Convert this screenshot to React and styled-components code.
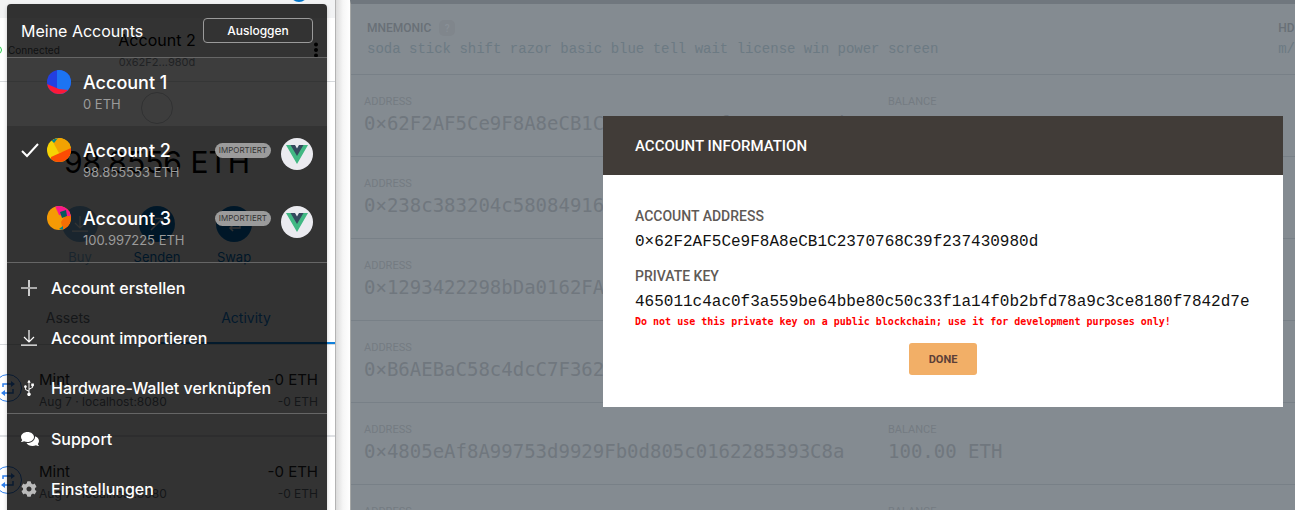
import React from "react";
import styled, { createGlobalStyle, css } from "styled-components";
import { FaComments, FaCog, FaUsb } from "react-icons/fa";

const GlobalStyle = createGlobalStyle`
  *, *::before, *::after { box-sizing: border-box; }
  body { margin: 0; background: #fff; font-family: Inter, "Liberation Sans", sans-serif; }
  button { font: inherit; cursor: pointer; }
  a { color: inherit; text-decoration: none; }
  h1, h2, h3, p, ul, dl, dd { margin: 0; padding: 0; }
  ul { list-style: none; }
`;

const sans = css`font-family: Inter, "Liberation Sans", sans-serif;`;
const caps = css`font-family: Roboto, "Liberation Sans", sans-serif;`;
const mono = css`font-family: "DejaVu Sans Mono", "Liberation Mono", monospace;`;
const monoLight = css`font-family: "Liberation Mono", monospace;`;

const Page = styled.div`
  display: grid;
  grid-template-columns: 336px 14px minmax(0, 1fr);
  height: 100vh;
  overflow: hidden;
`;

/* ---------- wallet popup ---------- */

const Wallet = styled.section`
  ${sans}
  position: relative;
  overflow: hidden;
  border-right: 1px solid #b4b4b4;
  background: #fff;
`;

const WalletEdge = styled.div`
  background: linear-gradient(90deg, #dcdcdc, #f6f6f6 50%, #fff);
`;

const WalletContent = styled.div`
  margin-left: -21px;
`;

const NetworkBar = styled.div`
  height: 18px;
  display: flex;
  justify-content: flex-end;
  padding-right: 27px;
  background: #f2f3f4;
`;

const Identicon = styled.span`
  width: 18px;
  height: 18px;
  margin-top: -16px;
  border-radius: 50%;
  background: #0376c9;
`;

const WalletHeader = styled.header`
  display: grid;
  grid-template-columns: 82px 1fr 82px;
  align-items: center;
  height: 64px;
  border-bottom: 1px solid #d6d9dc;
`;

const Connected = styled.span`
  display: flex;
  align-items: center;
  gap: 6px;
  padding-left: 15px;
  font-size: 10px;
  color: #535a61;

  &::before {
    content: "";
    flex: none;
    width: 8px;
    height: 8px;
    border: 1px solid #28c94a;
    border-radius: 50%;
  }
`;

const CurrentAccount = styled.div`
  text-align: center;
  font-size: 16px;
  line-height: 24px;
  color: #000;

  small {
    display: block;
    font-size: 11px;
    line-height: 20px;
    color: #6a737d;
  }
`;

const KebabButton = styled.button`
  justify-self: end;
  display: flex;
  width: 24px;
  margin-right: 7px;
  padding: 0 10px;
  border: 0;
  background: none;
`;

const Overview = styled.div`
  display: flex;
  flex-direction: column;
  align-items: center;
  padding-top: 10px;
`;

const TokenCircle = styled.span`
  width: 32px;
  height: 32px;
  border: 1px solid #bbc0c5;
  border-radius: 50%;
`;

const Balance = styled.p`
  margin-top: 18px;
  font-size: 30px;
  font-weight: 400;
  line-height: 40px;
  color: #000;
`;

const Actions = styled.div`
  display: flex;
  margin-top: 24px;
`;

const ActionButton = styled.button`
  display: flex;
  flex-direction: column;
  align-items: center;
  gap: 6px;
  width: 77px;
  padding: 0;
  border: 0;
  background: none;
  font-size: 13px;
  line-height: 18px;
  color: #0376c9;
  opacity: ${(p) => (p.disabled ? 0.5 : 1)};

  span {
    display: grid;
    place-items: center;
    width: 36px;
    height: 36px;
    border-radius: 50%;
    background: #0376c9;
    color: #fff;
  }
`;

const Tabs = styled.div`
  display: flex;
  margin-top: 27px;
  border-bottom: 1px solid #d6d9dc;
`;

const Tab = styled.button`
  flex: 1;
  height: 51px;
  padding: 0;
  border: 0;
  border-bottom: 2px solid ${(p) => (p.$active ? "#1081dc" : "transparent")};
  background: none;
  font-size: 14px;
  color: ${(p) => (p.$active ? "#1081dc" : "#6a737d")};
`;

const Transaction = styled.li`
  display: grid;
  grid-template-columns: 28px 1fr auto;
  column-gap: 17px;
  align-items: center;
  height: 92px;
  padding: 2px 17px 0 15px;
  border-bottom: 2px solid #dfe1e4;
`;

const TxIcon = styled.svg`
  display: block;
  margin-bottom: 6px;
`;

const TxText = styled.p`
  text-align: ${(p) => p.$align || "left"};
  font-size: 15px;
  line-height: 22px;
  color: #24272a;

  small {
    display: block;
    font-size: 12px;
    color: #6a737d;
  }
`;

/* ---------- account menu ---------- */

const Menu = styled.nav`
  position: absolute;
  top: 4px;
  left: 7px;
  width: 320px;
  border-radius: 4px 4px 0 0;
  background: rgba(0, 0, 0, 0.8);
  box-shadow: 0 2px 4px rgba(0, 0, 0, 0.2);
  color: #fff;
`;

const MenuHeader = styled.header`
  display: flex;
  align-items: center;
  justify-content: space-between;
  height: 54px;
  padding: 0 14px;
  border-bottom: 1px solid #666;

  h2 {
    font-size: 16px;
    font-weight: 400;
  }
`;

const LogoutButton = styled.button`
  width: 110px;
  height: 25px;
  padding: 0;
  border: 1px solid #9a9a9a;
  border-radius: 4px;
  background: none;
  font-size: 12px;
  font-weight: 500;
  color: #fff;
`;

const AccountList = styled.ul`
  border-bottom: 1px solid #666;
`;

const AccountButton = styled.button`
  display: grid;
  grid-template-columns: 18px 24px 1fr auto 32px;
  column-gap: 10px;
  align-items: start;
  width: 100%;
  height: 68px;
  padding: 12px 14px 0 12px;
  border: 0;
  background: ${(p) => (p.$hover ? "rgba(255, 255, 255, 0.05)" : "none")};
  text-align: left;
  color: #fff;

  > svg { display: block; }
`;

const AccountText = styled.span`
  padding-left: 2px;
  font-size: 18px;
  font-weight: 500;
  line-height: 25px;
  white-space: nowrap;

  small {
    display: block;
    font-size: 13px;
    font-weight: 400;
    line-height: 18px;
    color: #9b9b9b;
  }
`;

const ImportedBadge = styled.span`
  margin-top: 5px;
  padding: 0 4px;
  border-radius: 8px;
  background: #9b9b9b;
  font-size: 8px;
  line-height: 15px;
  color: #333;
`;

const MenuGroup = styled.ul`
  border-bottom: 1px solid #666;
  &:last-child { border-bottom: 0; }
`;

const MenuItem = styled.button`
  display: grid;
  grid-template-columns: 20px 1fr;
  column-gap: 10px;
  align-items: center;
  width: 100%;
  height: 50px;
  padding: 0 14px;
  border: 0;
  background: none;
  text-align: left;
  font-size: 16px;
  font-weight: 500;
  color: #fff;
`;

/* ---------- workspace with dimmed account table ---------- */

const Workspace = styled.main`
  position: relative;
  overflow: hidden;
  border-top: 4px solid #70777e;
  border-left: 1px solid #a5a7a6;
  background: #848b91;
`;

const SeedBar = styled.section`
  display: flex;
  justify-content: space-between;
  height: 71px;
  padding: 14px 0 0 16px;
  border-bottom: 1px solid #788087;
`;

const SeedTitle = styled.h3`
  ${caps}
  display: flex;
  align-items: center;
  gap: 8px;
  height: 20px;
  font-size: 12px;
  font-weight: 500;
  color: #697077;
`;

const Help = styled.span`
  display: grid;
  place-items: center;
  width: 16px;
  height: 16px;
  border-radius: 5px;
  background: #80868c;
  font-size: 10px;
  color: #899097;
`;

const SeedText = styled.p`
  ${monoLight}
  font-size: 14px;
  line-height: 22px;
  white-space: nowrap;
  color: #6c7a83;
`;

const AccountTable = styled.table`
  width: 100%;
  border-collapse: separate;
  border-spacing: 0;
  table-layout: fixed;

  td {
    height: 82px;
    padding: 18px 0 0 13px;
    border-bottom: 1px solid #788087;
    vertical-align: top;
    white-space: nowrap;
  }
  td:first-child { width: 524px; }
`;

const CellLabel = styled.span`
  ${caps}
  display: block;
  font-size: 11px;
  line-height: 18px;
  color: #747b82;
`;

const CellValue = styled.span`
  ${mono}
  display: block;
  font-size: 19px;
  line-height: 24px;
  color: #70777e;
`;

/* ---------- modal ---------- */

const Modal = styled.section`
  position: absolute;
  top: 112px;
  right: 12px;
  width: 680px;
  background: #fff;
`;

const ModalHeader = styled.header`
  ${caps}
  display: flex;
  align-items: center;
  height: 59px;
  padding: 0 32px;
  background: #413c38;

  h1 {
    font-size: 15px;
    font-weight: 500;
    color: #fff;
  }
`;

const ModalBody = styled.div`
  display: flex;
  flex-direction: column;
  padding: 31px 32px 32px;
`;

const Field = styled.dl`
  & + & { margin-top: 12px; }

  dt {
    ${caps}
    font-size: 14px;
    font-weight: 500;
    line-height: 20px;
    color: #5f5a56;
  }
  dd {
    ${monoLight}
    margin-top: 4px;
    font-size: 16px;
    line-height: 24px;
    white-space: nowrap;
    color: #111;
  }
`;

const Warning = styled.p`
  ${mono}
  font-size: 10px;
  font-weight: 700;
  line-height: 16px;
  color: #f00;
`;

const DoneButton = styled.button`
  ${caps}
  align-self: center;
  width: 68px;
  height: 32px;
  margin-top: 13px;
  padding: 0;
  border: 0;
  border-radius: 3px;
  background: #f2af67;
  font-size: 11px;
  font-weight: 700;
  color: #5c4038;
`;

/* ---------- drawings ---------- */

const avatars = {
  one: (
    <>
      <path fill="#2340e1" d="M0 0h24v24H0z" />
      <path fill="#1c74f2" d="M10 0h14v24H10z" />
      <path fill="#fb1938" d="M0 14l12 5 9 1-3 4H0z" />
    </>
  ),
  two: (
    <>
      <path fill="#f6d204" d="M0 0h24v24H0z" />
      <path fill="#f2a202" d="M6 0h18v12l-12 3L7 6z" />
      <path fill="#fb4c04" d="M4 19l20-9v14H4z" />
      <path fill="#03888a" d="M4 2l7-2-4 5z" />
    </>
  ),
  three: (
    <>
      <path fill="#f59a05" d="M0 0h24v24H0z" />
      <path fill="#fb188c" d="M8 0h16v12l-12-3z" />
      <path fill="#f56f03" d="M14 16l4-6h6v14h-8z" />
      <path fill="#075a5c" d="M13 6l6-2 1 6-5 2z" />
      <path fill="#03888a" d="M12 23l4-3v4z" />
    </>
  ),
};

const Avatar = ({ kind }) => (
  <svg width="24" height="24" viewBox="0 0 24 24" aria-hidden="true">
    <clipPath id={`clip-${kind}`}><circle cx="12" cy="12" r="12" /></clipPath>
    <g clipPath={`url(#clip-${kind})`}>{avatars[kind]}</g>
  </svg>
);

const VueLogo = () => (
  <svg width="32" height="32" viewBox="0 0 32 32" aria-hidden="true">
    <circle cx="16" cy="16" r="16" fill="#ebebf0" />
    <path fill="#41b883" d="M5 7h6l5 8.500L21 7h6L16 26z" />
    <path fill="#35495e" d="M9.500 7H14l2 3.500L18 7h4.500L16 18z" />
  </svg>
);

const Check = () => (
  <svg width="20" height="24" viewBox="0 0 20 24" fill="none" stroke="#fff" strokeWidth="2" aria-hidden="true">
    <path d="M3 13l5 5L19 6" />
  </svg>
);

const Plus = () => (
  <svg width="16" height="16" viewBox="0 0 16 16" fill="none" stroke="#ccc" aria-hidden="true">
    <path strokeWidth="2" d="M8 0v16" />
    <path strokeWidth="2" stroke="#aaa" d="M0 8h16" />
  </svg>
);

const Download = () => (
  <svg width="16" height="16" viewBox="0 0 16 16" fill="none" stroke="currentColor" strokeWidth="1.200" aria-hidden="true">
    <path d="M8 0v12M3 7l5 5 5-5M0 15.200h16" />
  </svg>
);

const SendArrow = () => (
  <svg width="16" height="16" viewBox="0 0 16 16" fill="none" stroke="currentColor" strokeWidth="1.500" aria-hidden="true">
    <path d="M2 14L13 3M6 2.500h7.500V10" />
  </svg>
);

const SwapArrows = () => (
  <svg width="16" height="16" viewBox="0 0 16 16" fill="none" stroke="currentColor" strokeWidth="1.500" aria-hidden="true">
    <path d="M2 7V3h9M9 0l3 3-3 3M14 8v4H4M7 9l-3 3 3 3" />
  </svg>
);

const Usb = styled(FaUsb)`
  transform: rotate(-90deg);
`;

const Kebab = () => (
  <svg width="4" height="16" viewBox="0 0 4 16" fill="#000" aria-hidden="true">
    <circle cx="2" cy="2.500" r="2" /><circle cx="2" cy="8" r="2" /><circle cx="2" cy="13.500" r="2" />
  </svg>
);

const Interaction = () => (
  <TxIcon width="28" height="28" viewBox="0 0 28 28" fill="none" stroke="#2f80ed" aria-hidden="true">
    <circle cx="14" cy="14" r="13.500" />
    <path strokeWidth="1.500" d="M9 13v-3h9M19 15v4h-9" />
    <path fill="#2f80ed" stroke="none" d="M17 7l4 3-4 3zM11 16l-4 3 4 3z" />
  </TxIcon>
);

/* ---------- data ---------- */

const walletAccounts = [
  { kind: "one", name: "Account 1", balance: "0 ETH", hover: true },
  { kind: "two", name: "Account 2", balance: "98.855553 ETH", selected: true, imported: true },
  { kind: "three", name: "Account 3", balance: "100.997225 ETH", imported: true },
];

const menuGroups = [
  [
    { label: "Account erstellen", icon: <Plus /> },
    { label: "Account importieren", icon: <Download /> },
    { label: "Hardware-Wallet verknüpfen", icon: <Usb size={16} /> },
  ],
  [
    { label: "Support", icon: <FaComments size={18} /> },
    { label: "Einstellungen", icon: <FaCog size={16} color="#bbb" /> },
  ],
];

const chainAccounts = [
  "0×62F2AF5Ce9F8A8eCB1C2370768C39f237430980d",
  "0×238c383204c58084916",
  "0×1293422298bDa0162FA",
  "0×B6AEBaC58c4dcC7F362",
  "0×4805eAf8A99753d9929Fb0d805c0162285393C8a",
  "",
];

export default function App() {
  return (
    <>
      <GlobalStyle />
      <Page>
        <Wallet>
          <WalletContent>
            <NetworkBar><Identicon /></NetworkBar>
            <WalletHeader>
              <Connected>Connected</Connected>
              <CurrentAccount>Account 2<small>0x62F2...980d</small></CurrentAccount>
              <KebabButton aria-label="Optionen"><Kebab /></KebabButton>
            </WalletHeader>
            <Overview>
              <TokenCircle />
              <Balance>98.8556 ETH</Balance>
              <Actions>
                <ActionButton disabled><span><Download /></span>Buy</ActionButton>
                <ActionButton><span><SendArrow /></span>Senden</ActionButton>
                <ActionButton><span><SwapArrows /></span>Swap</ActionButton>
              </Actions>
            </Overview>
            <Tabs>
              <Tab>Assets</Tab>
              <Tab $active>Activity</Tab>
            </Tabs>
            <ul>
              {[1, 2].map((id) => (
                <Transaction key={id}>
                  <Interaction />
                  <TxText>Mint<small>Aug 7 · localhost:8080</small></TxText>
                  <TxText $align="right">-0 ETH<small>-0 ETH</small></TxText>
                </Transaction>
              ))}
            </ul>
          </WalletContent>

          <Menu>
            <MenuHeader>
              <h2>Meine Accounts</h2>
              <LogoutButton>Ausloggen</LogoutButton>
            </MenuHeader>
            <AccountList>
              {walletAccounts.map((a) => (
                <li key={a.kind}>
                  <AccountButton $hover={a.hover}>
                    {a.selected ? <Check /> : <span />}
                    <Avatar kind={a.kind} />
                    <AccountText>{a.name}<small>{a.balance}</small></AccountText>
                    {a.imported && <ImportedBadge>IMPORTIERT</ImportedBadge>}
                    {a.imported && <VueLogo />}
                  </AccountButton>
                </li>
              ))}
            </AccountList>
            {menuGroups.map((group) => (
              <MenuGroup key={group[0].label}>
                {group.map((item) => (
                  <li key={item.label}>
                    <MenuItem>{item.icon}<span>{item.label}</span></MenuItem>
                  </li>
                ))}
              </MenuGroup>
            ))}
          </Menu>
        </Wallet>

        <WalletEdge />

        <Workspace>
          <SeedBar>
            <div>
              <SeedTitle>MNEMONIC <Help>?</Help></SeedTitle>
              <SeedText>soda stick shift razor basic blue tell wait license win power screen</SeedText>
            </div>
            <div>
              <SeedTitle>HD</SeedTitle>
              <SeedText>m/</SeedText>
            </div>
          </SeedBar>
          <AccountTable>
            <tbody>
              {chainAccounts.map((address, i) => (
                <tr key={i}>
                  <td><CellLabel>ADDRESS</CellLabel><CellValue>{address}</CellValue></td>
                  <td><CellLabel>BALANCE</CellLabel><CellValue>100.00 ETH</CellValue></td>
                </tr>
              ))}
            </tbody>
          </AccountTable>

          <Modal role="dialog" aria-labelledby="modal-title">
            <ModalHeader><h1 id="modal-title">ACCOUNT INFORMATION</h1></ModalHeader>
            <ModalBody>
              <Field>
                <dt>ACCOUNT ADDRESS</dt>
                <dd>0×62F2AF5Ce9F8A8eCB1C2370768C39f237430980d</dd>
              </Field>
              <Field>
                <dt>PRIVATE KEY</dt>
                <dd>465011c4ac0f3a559be64bbe80c50c33f1a14f0b2bfd78a9c3ce8180f7842d7e</dd>
              </Field>
              <Warning>Do not use this private key on a public blockchain; use it for development purposes only!</Warning>
              <DoneButton>DONE</DoneButton>
            </ModalBody>
          </Modal>
        </Workspace>
      </Page>
    </>
  );
}
